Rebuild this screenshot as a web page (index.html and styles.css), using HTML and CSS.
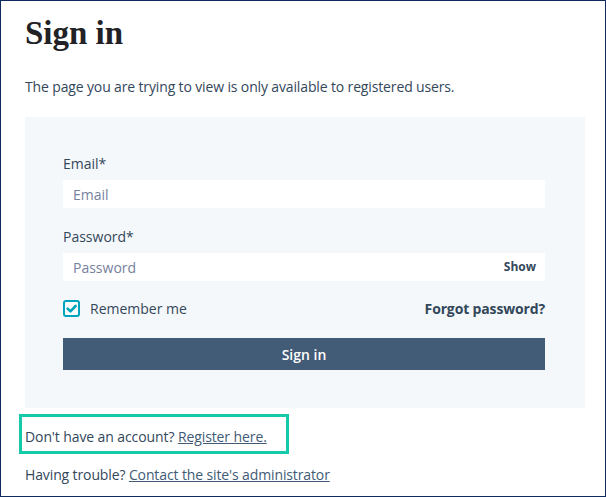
FILE: index.html
```html
<!DOCTYPE html>
<html lang="en">
<head>
<meta charset="utf-8">
<title>Sign in</title>
<link rel="stylesheet" href="styles.css">
</head>
<body>
<div class="page">
  <h1 class="title">Sign in</h1>
  <p class="intro">The page you are trying to view is only available to registered users.</p>
  <form class="panel">
    <label class="label" for="email">Email*</label>
    <input class="field" id="email" type="email" placeholder="Email">
    <label class="label label-pw" for="pw">Password*</label>
    <div class="pw-wrap">
      <input class="field" id="pw" type="password" placeholder="Password">
      <span class="show">Show</span>
    </div>
    <div class="row">
      <label class="remember">
        <span class="check"><svg viewBox="0 0 17 17" width="17" height="17"><path d="M4.6 8.6 L7.4 11.3 L12.6 6" fill="none" stroke="#00a4bd" stroke-width="2.6" stroke-linecap="round" stroke-linejoin="round"/></svg></span>
        <span>Remember me</span>
      </label>
      <a class="forgot" href="#">Forgot password?</a>
    </div>
    <button class="btn" type="button">Sign in</button>
  </form>
  <p class="register">Don't have an account? <a class="link" href="#">Register here.</a></p>
  <p class="trouble">Having trouble? <a class="link" href="#">Contact the site's administrator</a></p>
</div>
</body>
</html>
```
FILE: styles.css
```css
* { box-sizing: border-box; }
html, body { margin: 0; padding: 0; background: #fff; }
body {
  font-family: "Open Sans", "Liberation Sans", sans-serif;
  font-size: 14px;
  color: #33475b;
}
.page {
  width: 606px;
  height: 497px;
  border: 1px solid #0f2a5c;
  padding: 0 20px 0 24px;
  overflow: hidden;
}
.title {
  margin: 12px 0 0;
  font-family: "Liberation Serif", "Times New Roman", serif;
  font-weight: 700;
  font-size: 33px;
  line-height: 40px;
  color: #222226;
}
.intro {
  margin: 24px 0 0;
  line-height: 20px;
  letter-spacing: -0.14px;
}
.panel {
  margin-top: 20px;
  background: #f5f8fa;
  padding: 37px 40px 38px 38px;
  display: flex;
  flex-direction: column;
}
.label {
  display: block;
  line-height: 20px;
  margin-bottom: 6px;
  color: #33475b;
}
.label-pw { margin-top: 19px; }
.field {
  display: block;
  width: 100%;
  height: 28px;
  border: none;
  background: #fff;
  padding: 0 10px;
  font-family: inherit;
  font-size: 14px;
  color: #33475b;
  outline: none;
}
.field::placeholder { color: #76819e; }
.pw-wrap { position: relative; }
.show {
  position: absolute;
  right: 9px;
  top: 0;
  line-height: 28px;
  font-size: 12px;
  font-weight: 700;
  color: #33475b;
}
.row {
  margin-top: 19px;
  display: flex;
  justify-content: space-between;
  align-items: center;
  height: 17px;
}
.remember {
  display: flex;
  align-items: center;
  gap: 10px;
  color: #33475b;
}
.check {
  width: 17px;
  height: 17px;
  border: 2px solid #00a4bd;
  border-radius: 3px;
  background: #fff;
  display: flex;
  align-items: center;
  justify-content: center;
}
.check svg { display: block; flex: none; }
.forgot {
  font-weight: 700;
  color: #33475b;
  text-decoration: none;
  letter-spacing: -0.15px;
}
.btn {
  margin-top: 21px;
  height: 32px;
  border: none;
  background: #425b76;
  color: #fff;
  font-family: inherit;
  font-size: 14px;
  font-weight: 600;
  width: 100%;
}
.register {
  margin: 6px 0 0 -6px;
  width: 270px;
  height: 40px;
  border: 3px solid #14caa8;
  padding: 10px 0 0 3px;
  line-height: 20px;
  letter-spacing: -0.1px;
}
.trouble {
  margin: 11px 0 0;
  line-height: 20px;
  letter-spacing: -0.12px;
}
.link {
  color: #425b76;
  text-decoration: underline;
}
```
